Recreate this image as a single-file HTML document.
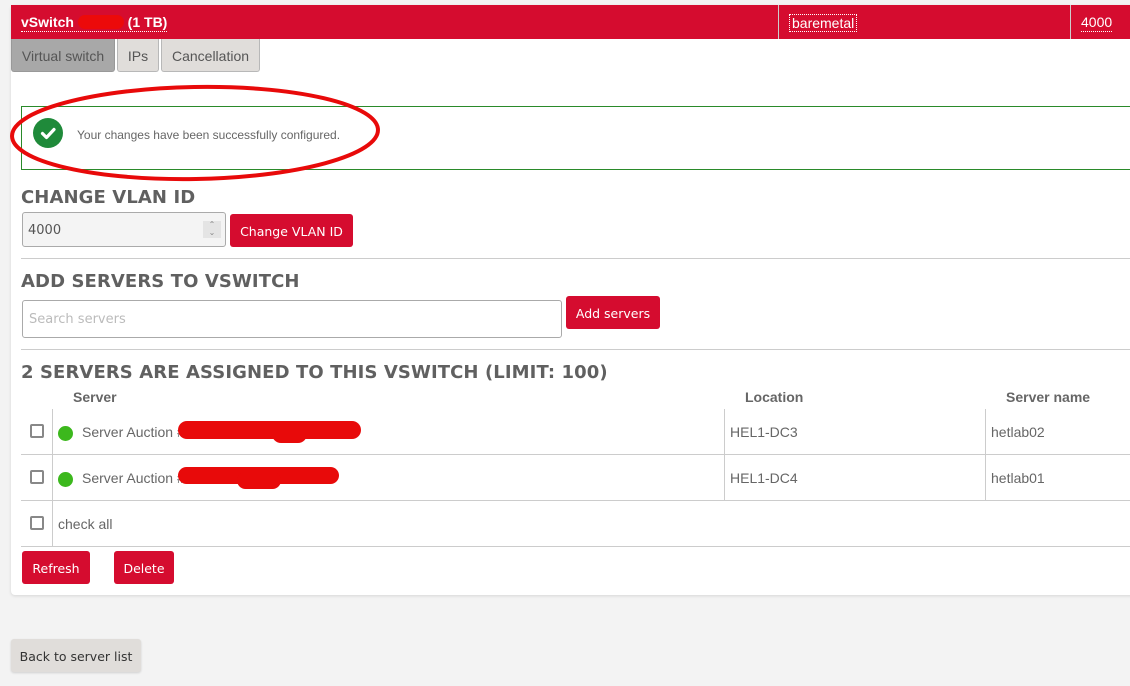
<!DOCTYPE html>
<html><head><meta charset="utf-8"><style>
*{box-sizing:border-box;margin:0;padding:0}
body{width:1130px;height:686px;background:#f3f3f3;font-family:"Liberation Sans",sans-serif;position:relative;overflow:hidden;color:#666}
.a{position:absolute}
.card{left:11px;top:5px;width:1130px;height:590px;background:#fff;border-radius:4px;box-shadow:0 1px 3px rgba(0,0,0,.12)}
.hdr{left:11px;top:5px;width:1130px;height:34px;background:#d50c2f;color:#fff}
.tab{top:39px;height:33px;border:1px solid #b8b8b8;border-top:none;background:#e0ddda;color:#555;font-size:14px;line-height:34px;text-align:center;border-radius:0 0 3px 3px}
h2{position:absolute;font-family:"DejaVu Sans",sans-serif;font-weight:bold;font-size:18px;color:#606060;letter-spacing:0.1px}
.btn{position:absolute;background:#d50c2f;color:#fff;font-family:"DejaVu Sans",sans-serif;font-size:12.5px;border-radius:3px;text-align:center}
.hr{position:absolute;left:21px;width:1110px;height:1px;background:#ccc}
.cb{position:absolute;width:14px;height:14px;border:2px solid #888;border-radius:2px;left:30px}
.dot{position:absolute;width:15px;height:15px;border-radius:50%;background:#3cb81d;left:58px}
.t{position:absolute;font-size:14px;color:#666}
.th{position:absolute;font-size:14px;font-weight:bold;color:#666}
.vl{position:absolute;width:1px;background:#ccc}
.red{position:absolute;background:#e80a0a;border-radius:12px}
</style></head><body>
<div class="a card"></div>
<div class="a hdr">
 <div class="a" style="left:10px;top:9px;font-weight:bold;font-size:14px;border-bottom:1px dotted #fff;line-height:17px">vSwitch <span style="display:inline-block;width:46px;height:14px;background:#ec0a0a;border-radius:7px;vertical-align:-2px"></span> (1 TB)</div>
 <div class="a" style="left:767px;top:0;width:1px;height:34px;background:#ccc"></div>
 <div class="a" style="left:778px;top:9px;font-size:14px;border:1px dotted #fff;line-height:16px;padding:0 2px">baremetal</div>
 <div class="a" style="left:1059px;top:0;width:1px;height:34px;background:#ccc"></div>
 <div class="a" style="left:1070px;top:9px;font-size:14px;border-bottom:1px dotted #fff;line-height:17px">4000</div>
</div>
<div class="a tab" style="left:11px;width:104px;background:#a8a8a8;border-color:#999">Virtual switch</div>
<div class="a tab" style="left:117px;width:42px">IPs</div>
<div class="a tab" style="left:161px;width:99px">Cancellation</div>

<div class="a" style="left:21px;top:106px;width:1120px;height:64px;border:1px solid #2a8a2a"></div>
<div class="a" style="left:33px;top:118px;width:30px;height:30px;border-radius:50%;background:#1f8a3a"></div>
<svg class="a" style="left:33px;top:118px" width="30" height="30"><path d="M9.5 15.5l4 4 7.5-8" stroke="#fff" stroke-width="3.2" fill="none" stroke-linecap="round" stroke-linejoin="round"/></svg>
<div class="a" style="left:77px;top:128px;font-size:12px;color:#666">Your changes have been successfully configured.</div>
<svg class="a" style="left:0;top:80px" width="400" height="110"><ellipse cx="195" cy="53" rx="183" ry="46" fill="none" stroke="#e80a0a" stroke-width="4" transform="rotate(-1 195 53)"/></svg>

<h2 style="left:21px;top:187px">CHANGE VLAN ID</h2>
<div class="a" style="left:22px;top:212px;width:204px;height:35px;border:1px solid #aaa;border-radius:3px;background:#f4f4f4;font-size:13px;color:#555;padding:10px 5px;font-family:'DejaVu Sans',sans-serif">4000</div>
<div class="a" style="left:203px;top:221px;width:18px;height:17px;background:#e4e4e4;color:#888;font-size:8px;text-align:center;line-height:8px">⌃<br>⌄</div>
<div class="btn" style="left:230px;top:214px;width:123px;height:33px;line-height:35px">Change VLAN ID</div>
<div class="hr" style="top:258px"></div>

<h2 style="left:21px;top:271px">ADD SERVERS TO VSWITCH</h2>
<div class="a" style="left:22px;top:300px;width:540px;height:38px;border:1px solid #aaa;border-radius:3px;font-family:'DejaVu Sans',sans-serif;font-size:13px;color:#bbb;padding:11px 6px">Search servers</div>
<div class="btn" style="left:566px;top:296px;width:94px;height:33px;line-height:35px">Add servers</div>
<div class="hr" style="top:349px"></div>

<h2 style="left:21px;top:362px">2 SERVERS ARE ASSIGNED TO THIS VSWITCH (LIMIT: 100)</h2>
<div class="th" style="left:73px;top:389px">Server</div>
<div class="th" style="left:745px;top:389px">Location</div>
<div class="th" style="left:1006px;top:389px">Server name</div>
<div class="vl" style="left:52px;top:409px;height:137px"></div>
<div class="vl" style="left:724px;top:409px;height:91px"></div>
<div class="vl" style="left:985px;top:409px;height:91px"></div>
<div class="hr" style="top:454px"></div>
<div class="hr" style="top:500px"></div>
<div class="hr" style="top:546px"></div>

<div class="cb" style="top:424px"></div><div class="dot" style="top:426px"></div>
<div class="t" style="left:82px;top:424px">Server Auction #</div>
<div class="red" style="left:178px;top:421px;width:183px;height:18px"></div>
<div class="red" style="left:272px;top:425px;width:35px;height:18px"></div>
<div class="t" style="left:730px;top:424px">HEL1-DC3</div>
<div class="t" style="left:991px;top:424px">hetlab02</div>

<div class="cb" style="top:470px"></div><div class="dot" style="top:472px"></div>
<div class="t" style="left:82px;top:470px">Server Auction #</div>
<div class="red" style="left:178px;top:467px;width:161px;height:17px"></div>
<div class="red" style="left:237px;top:472px;width:44px;height:17px"></div>
<div class="t" style="left:730px;top:470px">HEL1-DC4</div>
<div class="t" style="left:991px;top:470px">hetlab01</div>

<div class="cb" style="top:516px"></div>
<div class="t" style="left:58px;top:516px">check all</div>

<div class="btn" style="left:22px;top:551px;width:68px;height:33px;line-height:35px">Refresh</div>
<div class="btn" style="left:114px;top:551px;width:60px;height:33px;line-height:35px">Delete</div>

<div class="a" style="left:11px;top:639px;width:130px;height:33px;background:#e0ddda;border-radius:3px;font-family:'DejaVu Sans',sans-serif;font-size:12.5px;color:#333;text-align:center;line-height:35px;box-shadow:0 1px 2px rgba(0,0,0,.15)">Back to server list</div>
</body></html>
